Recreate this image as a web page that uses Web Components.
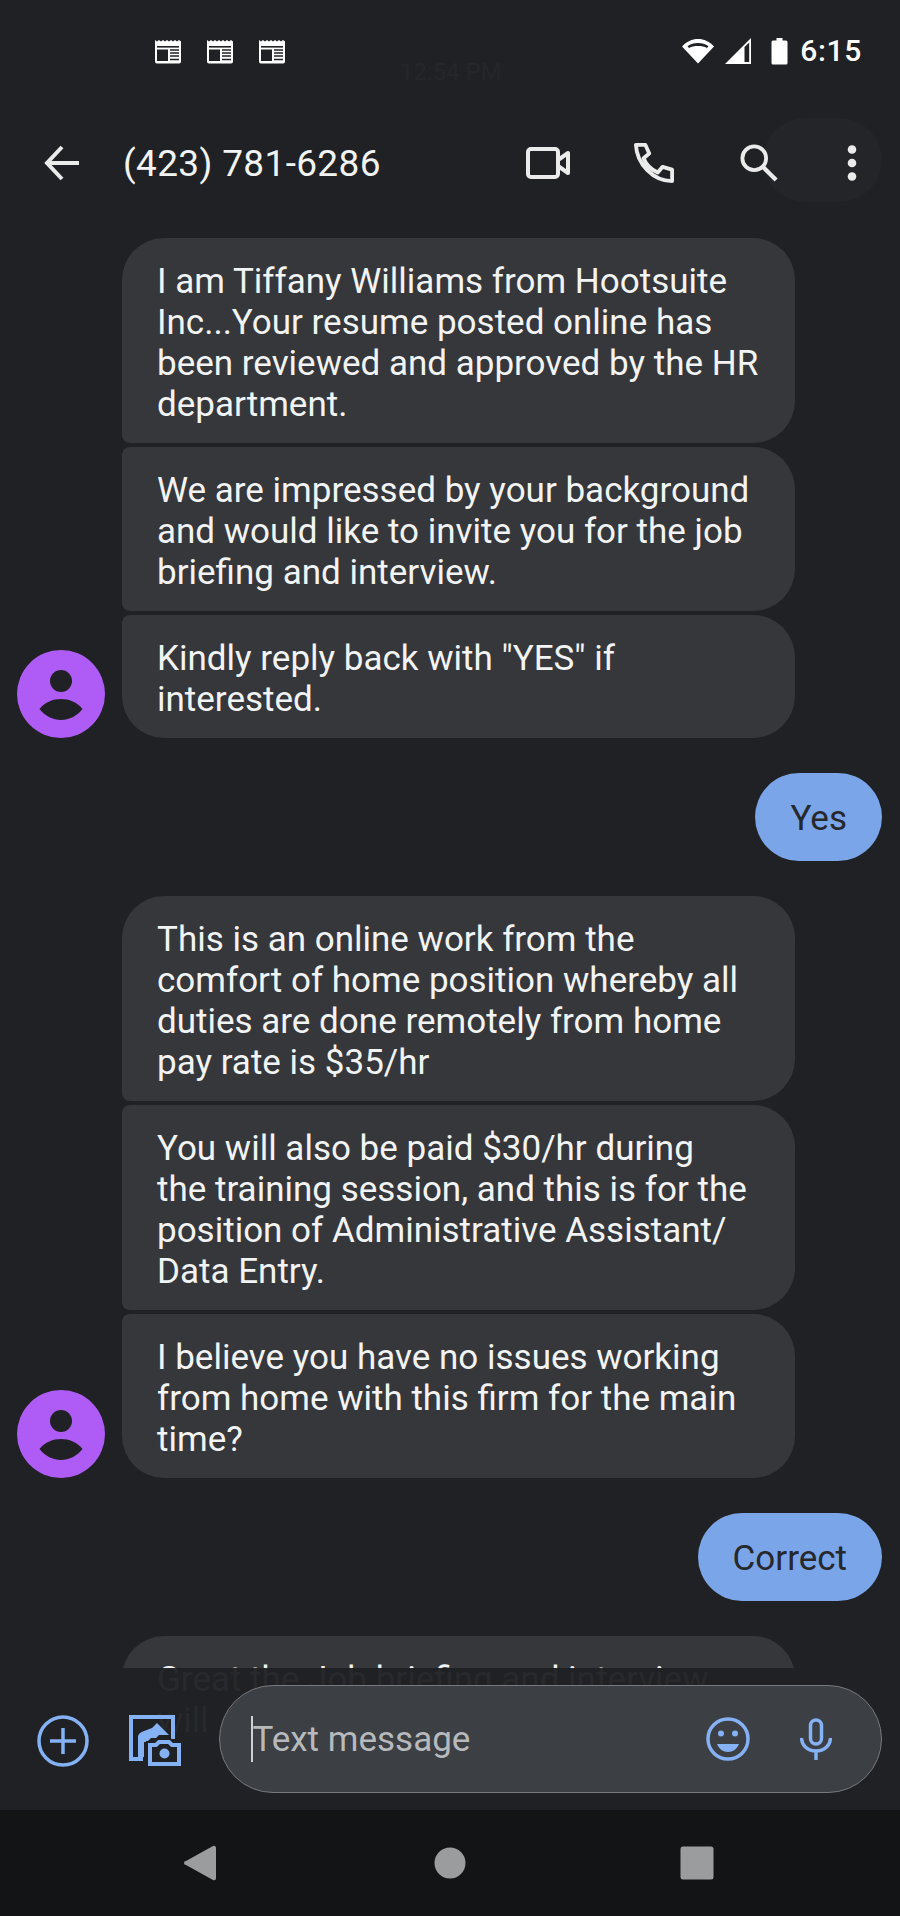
<!DOCTYPE html>
<html>
<head>
<meta charset="utf-8">
<style>
  html, body { margin: 0; padding: 0; background: #202124; }
  body { width: 900px; height: 1916px; overflow: hidden; font-family: Roboto, "Liberation Sans", sans-serif; }
</style>
</head>
<body>
<sms-app></sms-app>
<script>
const paperIcon = `<svg width="28" height="25" viewBox="0 0 28 25" fill="none">
  <path d="M1 1l2 1.6L5 1l2 1.6L9 1l2 1.6L13 1l2 1.6L17 1l2 1.6L21 1l2 1.6L25 1l2 1.6V22.5a2 2 0 0 1-2 2H3a2 2 0 0 1-2-2z" fill="#fff"/>
  <rect x="3" y="7" width="22" height="1.6" fill="#202124"/>
  <rect x="3" y="10.5" width="11" height="11.5" fill="#202124"/>
  <path d="M16 11h9M16 14h9M16 17h9M16 20.5h9" stroke="#202124" stroke-width="1.4"/>
</svg>`;

class StatusBar extends HTMLElement {
  constructor() {
    super();
    this.attachShadow({ mode: 'open' });
    this.shadowRoot.innerHTML = `
      <style>
        :host { display:flex; align-items:center; height:102px; box-sizing:border-box; padding:0 38px 0 154px; position:relative; color:#fff; }
        .papers { display:flex; gap:24px; }
        .papers span { display:block; height:25px; }
        .right { margin-left:auto; display:flex; align-items:center; }
        .time { font-size:30px; font-weight:500; letter-spacing:.7px; margin-left:12px; line-height:34px; }
        svg { display:block; }
        .ghost { position:absolute; left:400px; top:58px; font-size:24px; color:#25262a; }
      </style>
      <div class="papers"><span>${paperIcon}</span><span>${paperIcon}</span><span>${paperIcon}</span></div>
      <div class="ghost">12:54 PM</div>
      <div class="right">
        <svg width="34" height="28" viewBox="0 0 34 28" style="margin-right:9px">
          <path d="M17 26.5L1 9.5C5.5 4.5 11 2 17 2s11.5 2.5 16 7.5z" fill="#fff"/>
          <path d="M6.5 9.2C9.5 7 13 6 17 6s7.500 1 10.500 3.200L26 11C23.500 9.600 20.500 9 17 9S10.500 9.600 8 11z" fill="#202124"/>
        </svg>
        <svg width="28" height="28" viewBox="0 0 28 28" style="margin-right:19px">
          <path d="M27 1V27H1z" fill="#fff"/>
          <path d="M20.500 10V25H25.200V5.500z" fill="#202124"/>
        </svg>
        <svg width="17" height="28" viewBox="0 0 17 28">
          <path d="M5.500 1h6v2.500h3.500a1.500 1.500 0 0 1 1.500 1.500v21a1.500 1.500 0 0 1-1.500 1.500H2a1.500 1.500 0 0 1-1.500-1.500V5A1.500 1.500 0 0 1 2 3.500h3.500z" fill="#fff"/>
        </svg>
        <div class="time">6:15</div>
      </div>`;
  }
}

class TopBar extends HTMLElement {
  constructor() {
    super();
    this.attachShadow({ mode: 'open' });
    this.shadowRoot.innerHTML = `
      <style>
        :host { display:flex; align-items:center; height:122px; box-sizing:border-box; position:relative; color:#e8eaed; }
        .back { margin-left:44px; width:36px; height:36px; }
        .name { margin-left:43px; font-size:37px; letter-spacing:.35px; color:#f1f3f4; white-space:nowrap; }
        .actions { margin-left:auto; display:flex; align-items:center; }
        .hl { position:absolute; left:763px; top:16px; width:119px; height:84px; border-radius:42px; background:#242528; }
        svg { display:block; position:relative; }
      </style>
      <svg class="back" viewBox="0 0 36 36" fill="none" stroke="#ebebec" stroke-width="4">
        <path d="M35 18H3M18 2L3 18l15 16"/>
      </svg>
      <div class="name">(423) 781-6286</div>
      <div class="hl"></div>
      <div class="actions">
        <svg width="44" height="32" viewBox="0 0 44 32" fill="none" stroke="#ebebec" stroke-width="4" stroke-linejoin="round" style="margin-right:64px">
          <rect x="2" y="2" width="30" height="28" rx="3"/>
          <path d="M32 13L42 6V26L32 19z"/>
        </svg>
        <svg width="40" height="40" viewBox="0 0 42 42" fill="none" stroke="#ebebec" stroke-width="4" stroke-linejoin="round" style="margin-right:66px">
          <path d="M2 2h10l4 9-6 5c3 7 8 12 15 15l5-6 10 3v12C20 40 3 22 2 2z"/>
        </svg>
        <svg width="38" height="38" viewBox="0 0 40 40" fill="none" stroke="#ebebec" stroke-width="4" style="margin-right:69px">
          <circle cx="15" cy="15" r="12.500"/><path d="M24 24l14 14" stroke-width="4.500"/>
        </svg>
        <svg width="10" height="36" viewBox="0 0 10 36" fill="#ebebec" style="margin-right:43px">
          <circle cx="5" cy="4.500" r="4.300"/><circle cx="5" cy="18" r="4.300"/><circle cx="5" cy="31.500" r="4.300"/>
        </svg>
      </div>`;
  }
}

class MsgAvatar extends HTMLElement {
  constructor() {
    super();
    this.attachShadow({ mode: 'open' });
    this.shadowRoot.innerHTML = `
      <style>:host { display:block; width:88px; height:88px; flex:none; } svg { display:block; }</style>
      <svg width="88" height="88" viewBox="0 0 88 88">
        <circle cx="44" cy="44" r="44" fill="#af5cf7"/>
        <circle cx="44" cy="31" r="11" fill="#202124"/>
        <path d="M22.500 59C28 52 36 49 44 49s16 3 21.500 10C60 66 52 70 44 70s-16-4-21.500-11z" fill="#202124"/>
      </svg>`;
  }
}

// one bubble, corners come from the attribute
class MsgBubble extends HTMLElement {
  constructor() {
    super();
    this.attachShadow({ mode: 'open' });
    this.shadowRoot.innerHTML = `
      <style>
        :host { display:block; box-sizing:border-box; font-size:35px; line-height:41px; color:#f1f3f4; background:#36373b; padding:23px 20px 18px 35px; width:673px; border-radius:8px 42px 42px 8px; flex:none; }
        :host([pos="first"]) { border-radius:42px 42px 42px 8px; }
        :host([pos="last"]) { border-radius:8px 42px 42px 42px; }
        :host([me]) { background:#7aa5e8; color:#26282c; width:auto; border-radius:44px; padding:25px 35px 22px; }
        .t { white-space:pre-line; }
      </style>
      <div class="t"><slot></slot></div>`;
  }
}

class MsgGroup extends HTMLElement {
  constructor() {
    super();
    this.attachShadow({ mode: 'open' });
    this.shadowRoot.innerHTML = `
      <style>
        :host { display:flex; align-items:flex-end; gap:17px; padding-left:17px; flex:none; }
        .stack { display:flex; flex-direction:column; gap:4px; }
      </style>
      <msg-avatar></msg-avatar>
      <div class="stack"><slot></slot></div>`;
  }
}

class MsgList extends HTMLElement {
  constructor() {
    super();
    this.attachShadow({ mode: 'open' });
    this.shadowRoot.innerHTML = `
      <style>
        :host { display:flex; flex-direction:column; flex:1; min-height:0; overflow:hidden; padding:14px 18px 0 0; gap:35px; }
        ::slotted(msg-bubble) { align-self:flex-end; }
      </style>
      <slot></slot>`;
  }
}

class ComposeBar extends HTMLElement {
  constructor() {
    super();
    this.attachShadow({ mode: 'open' });
    this.shadowRoot.innerHTML = `
      <style>
        :host { display:flex; align-items:center; height:142px; flex:none; box-sizing:border-box; padding:17px 18px 17px 37px; position:relative; overflow:hidden; background:#202124; }
        svg { display:block; }
        .field { margin-left:38px; flex:1; height:108px; box-sizing:border-box; border:1.500px solid #77797c; border-radius:54px; background:#3c3f43; display:flex; align-items:center; padding:0 49px 0 31px; position:relative; }
        .caret { width:1.500px; height:46px; background:#cfd1d3; }
        .hint { font-size:35px; color:#b7babd; }
        .ghost { position:absolute; left:157px; top:-9px; font-size:35px; line-height:41px; color:#28292c; white-space:pre; }
        .right { margin-left:auto; display:flex; align-items:center; }
      </style>
      <div class="ghost">Great the Job briefing and interview
will</div>
      <svg width="52" height="52" viewBox="0 0 52 52" fill="none" stroke="#85b1f5" stroke-width="3.500" style="position:relative;margin-top:3px">
        <circle cx="26" cy="26" r="24"/><path d="M26 13V39M13 26H39"/>
      </svg>
      <svg width="52" height="52" viewBox="0 0 52 52" fill="none" stroke="#85b1f5" stroke-width="4" style="margin-left:40px;margin-top:3px;position:relative">
        <path d="M14 44H2V2H44V24"/>
        <path d="M9 42V22c0-3 3-5 6-6l8-3 5-5 12 12H30l-3 3h-5l-4 4h-3v15z" fill="#85b1f5" stroke="none"/>
        <path d="M21 30v19h29V30h-7l-3-3H30l-3 3z" fill="#202124" stroke="#202124" stroke-width="8"/>
        <path d="M21 30v19h29V30h-7l-3-3H30l-3 3z" fill="#202124"/>
        <circle cx="35.500" cy="38.500" r="5" fill="#85b1f5" stroke="none"/>
      </svg>
      <div class="field">
        <div class="caret"></div>
        <div class="hint">Text message</div>
        <div class="right">
          <svg width="44" height="44" viewBox="0 0 44 44" fill="none" stroke="#85b1f5" stroke-width="3.500" style="margin-right:50px">
            <circle cx="22" cy="22" r="20"/>
            <circle cx="15" cy="16.500" r="3" fill="#85b1f5" stroke="none"/><circle cx="29" cy="16.500" r="3" fill="#85b1f5" stroke="none"/>
            <path d="M11 27H33C31 32 27 35 22 35S13 32 11 27z" fill="#85b1f5" stroke="none"/>
          </svg>
          <svg width="32" height="42" viewBox="0 0 32 42" fill="none" stroke="#85b1f5" stroke-width="3.500">
            <rect x="10.500" y="2" width="11" height="24" rx="5.500"/>
            <path d="M1.500 20C2 28 8 33 16 33s14-5 14.500-13M16 33V42"/>
          </svg>
        </div>
      </div>`;
  }
}

class NavBar extends HTMLElement {
  constructor() {
    super();
    this.attachShadow({ mode: 'open' });
    this.shadowRoot.innerHTML = `
      <style>
        :host { display:flex; align-items:center; justify-content:center; height:106px; padding-right:2px; flex:none; background:#131416; }
        .i { display:block; }
      </style>
      <svg class="i" width="32" height="36" viewBox="0 0 32 36" fill="#9b9c9d" style="margin-right:218px"><path d="M29 1a2 2 0 0 1 3 1.500V33.500a2 2 0 0 1-3 1.500L2 20a2 2 0 0 1 0-4z"/></svg>
      <svg class="i" width="32" height="32" viewBox="0 0 32 32" fill="#9b9c9d" style="margin-right:214px"><circle cx="16" cy="16" r="15.500"/></svg>
      <svg class="i" width="34" height="34" viewBox="0 0 34 34" fill="#9b9c9d"><rect x="0.500" y="0.500" width="33" height="33" rx="2.500"/></svg>`;
  }
}

class SmsApp extends HTMLElement {
  constructor() {
    super();
    this.attachShadow({ mode: 'open' });
    this.shadowRoot.innerHTML = `
      <style>
        :host { display:flex; flex-direction:column; width:900px; height:1916px; background:#202124; }
      </style>
      <status-bar></status-bar>
      <top-bar></top-bar>
      <msg-list>
        <msg-group>
          <msg-bubble pos="first">I am Tiffany Williams from Hootsuite
Inc...Your resume posted online has
been reviewed and approved by the HR
department.</msg-bubble>
          <msg-bubble>We are impressed by your background
and would like to invite you for the job
briefing and interview.</msg-bubble>
          <msg-bubble pos="last">Kindly reply back with "YES" if
interested.</msg-bubble>
        </msg-group>
        <msg-bubble me>Yes</msg-bubble>
        <msg-group>
          <msg-bubble pos="first">This is an online work from the
comfort of home position whereby all
duties are done remotely from home
pay rate is $35/hr</msg-bubble>
          <msg-bubble>You will also be paid $30/hr during
the training session, and this is for the
position of Administrative Assistant/
Data Entry.</msg-bubble>
          <msg-bubble pos="last">I believe you have no issues working
from home with this firm for the main
time?</msg-bubble>
        </msg-group>
        <msg-bubble me>Correct</msg-bubble>
        <msg-group>
          <msg-bubble pos="first">Great the Job briefing and interview
will</msg-bubble>
        </msg-group>
      </msg-list>
      <compose-bar></compose-bar>
      <nav-bar></nav-bar>`;
  }
}

customElements.define('status-bar', StatusBar);
customElements.define('top-bar', TopBar);
customElements.define('msg-avatar', MsgAvatar);
customElements.define('msg-bubble', MsgBubble);
customElements.define('msg-group', MsgGroup);
customElements.define('msg-list', MsgList);
customElements.define('compose-bar', ComposeBar);
customElements.define('nav-bar', NavBar);
customElements.define('sms-app', SmsApp);
</script>
</body>
</html>
